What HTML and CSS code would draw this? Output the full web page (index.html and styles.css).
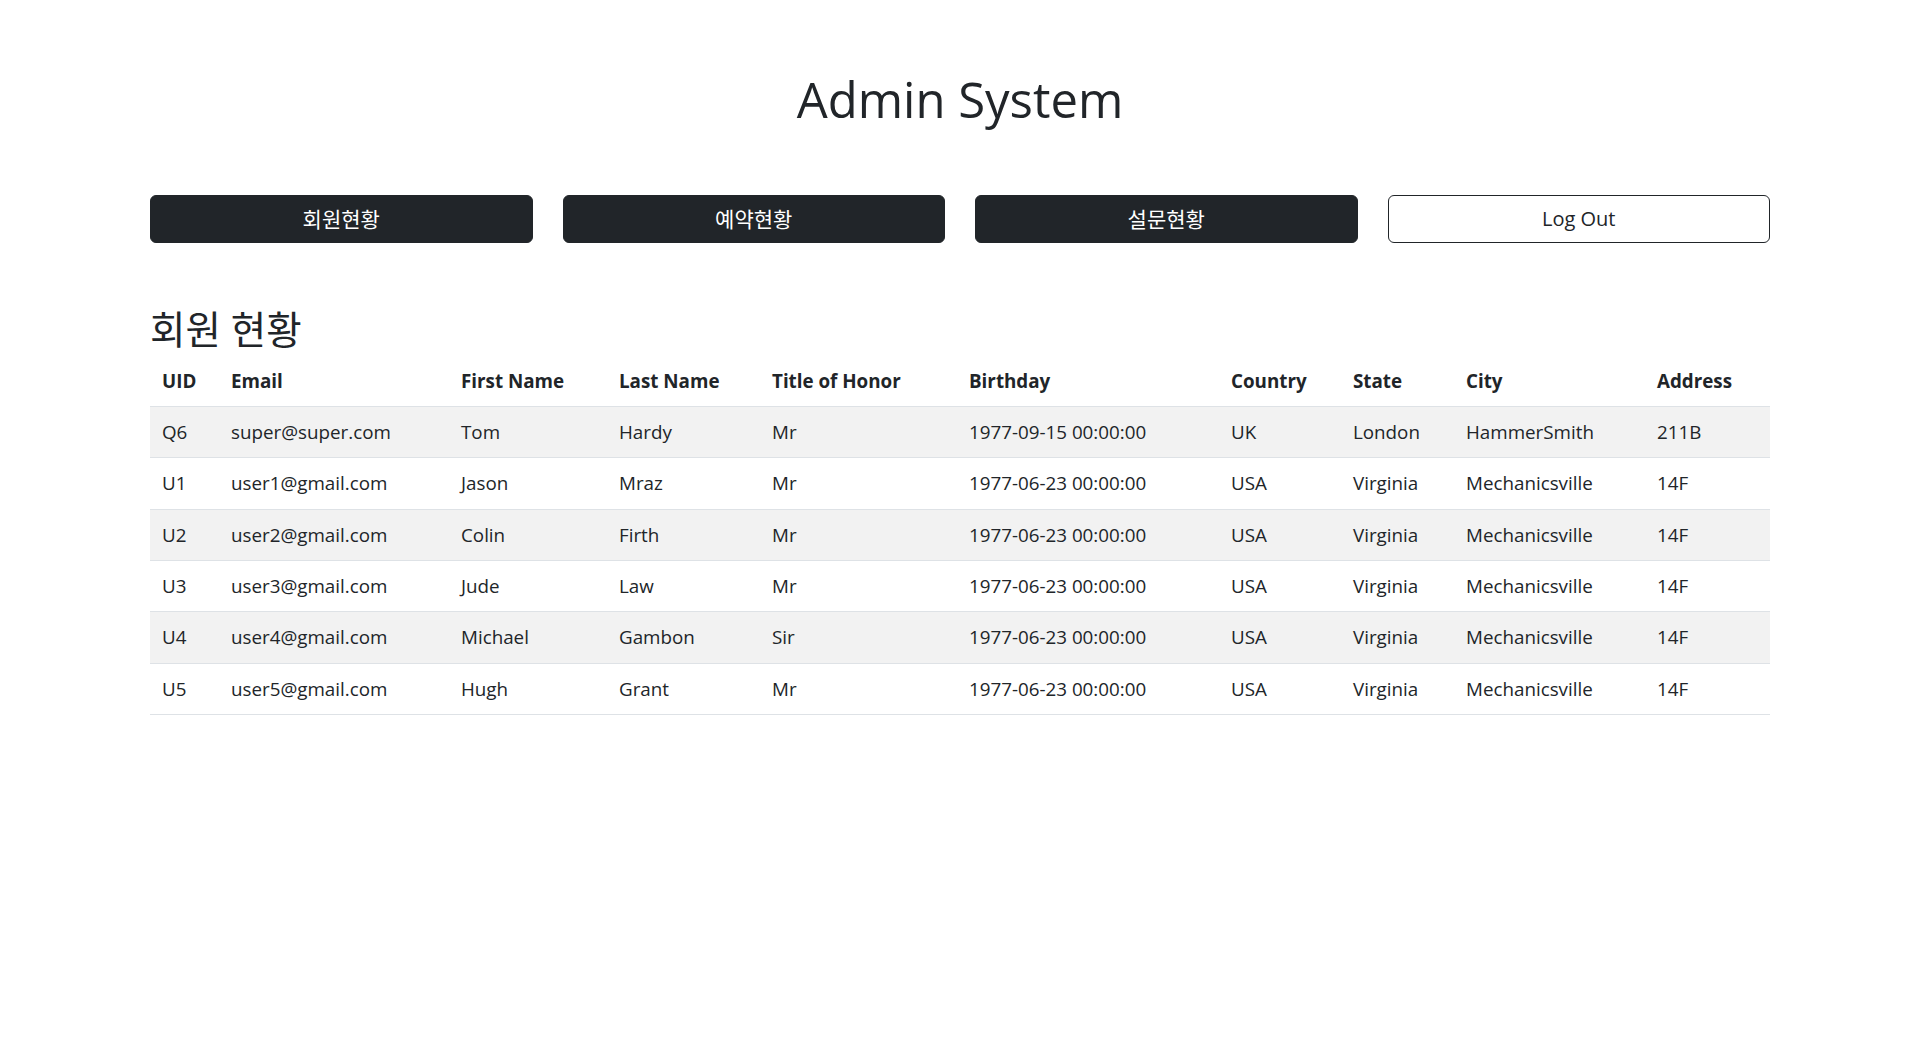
FILE: index.html
```html
<!DOCTYPE html>
<html lang="ko">
<head>
<meta charset="utf-8">
<title>Admin System</title>
<link rel="stylesheet" href="styles.css">
</head>
<body>
<div class="page">
  <h1 class="title">Admin System</h1>
  <nav class="menu">
    <button class="btn btn-dark">회원현황</button>
    <button class="btn btn-dark">예약현황</button>
    <button class="btn btn-dark">설문현황</button>
    <button class="btn btn-outline">Log Out</button>
  </nav>
  <h2 class="section-title">회원 현황</h2>
  <table class="users">
    <colgroup>
      <col class="c-uid"><col class="c-email"><col class="c-first"><col class="c-last"><col class="c-title">
      <col class="c-birth"><col class="c-country"><col class="c-state"><col class="c-city"><col class="c-addr">
    </colgroup>
    <thead>
      <tr><th>UID</th><th>Email</th><th>First Name</th><th>Last Name</th><th>Title of Honor</th><th>Birthday</th><th>Country</th><th>State</th><th>City</th><th>Address</th></tr>
    </thead>
    <tbody>
      <tr><td>Q6</td><td>super@super.com</td><td>Tom</td><td>Hardy</td><td>Mr</td><td>1977-09-15 00:00:00</td><td>UK</td><td>London</td><td>HammerSmith</td><td>211B</td></tr>
      <tr><td>U1</td><td>user1@gmail.com</td><td>Jason</td><td>Mraz</td><td>Mr</td><td>1977-06-23 00:00:00</td><td>USA</td><td>Virginia</td><td>Mechanicsville</td><td>14F</td></tr>
      <tr><td>U2</td><td>user2@gmail.com</td><td>Colin</td><td>Firth</td><td>Mr</td><td>1977-06-23 00:00:00</td><td>USA</td><td>Virginia</td><td>Mechanicsville</td><td>14F</td></tr>
      <tr><td>U3</td><td>user3@gmail.com</td><td>Jude</td><td>Law</td><td>Mr</td><td>1977-06-23 00:00:00</td><td>USA</td><td>Virginia</td><td>Mechanicsville</td><td>14F</td></tr>
      <tr><td>U4</td><td>user4@gmail.com</td><td>Michael</td><td>Gambon</td><td>Sir</td><td>1977-06-23 00:00:00</td><td>USA</td><td>Virginia</td><td>Mechanicsville</td><td>14F</td></tr>
      <tr><td>U5</td><td>user5@gmail.com</td><td>Hugh</td><td>Grant</td><td>Mr</td><td>1977-06-23 00:00:00</td><td>USA</td><td>Virginia</td><td>Mechanicsville</td><td>14F</td></tr>
    </tbody>
  </table>
</div>
</body>
</html>
```

FILE: styles.css
```css
* { box-sizing: border-box; }

html, body {
  margin: 0;
  padding: 0;
  background: #fff;
}

body {
  font-family: "Open Sans", "Noto Sans CJK KR", sans-serif;
  color: #212529;
  font-size: 16px;
  line-height: 1.5;
}

.page {
  width: 1620px;
  margin: 0 auto;
  padding-top: 70px;
}

.title {
  margin: 0;
  text-align: center;
  font-size: 49px;
  font-weight: 400;
  line-height: 58.8px;
}

.menu {
  display: grid;
  grid-template-columns: repeat(4, 1fr);
  gap: 30px;
  margin-top: 66px;
}

.btn {
  display: block;
  width: 100%;
  height: 48px;
  padding: 8px 16px;
  font-family: "Open Sans", "Noto Sans CJK KR", sans-serif;
  font-size: 20px;
  line-height: 30px;
  border-radius: 6px;
  border: 1px solid #212529;
  text-align: center;
  cursor: pointer;
}

.btn-dark {
  background: #212529;
  color: #fff;
  font-size: 21px;
}

.btn-outline {
  background: #fff;
  color: #212529;
}

.section-title {
  margin: 64px 0 4px;
  font-size: 38.5px;
  font-weight: 400;
  line-height: 45px;
}

.users {
  width: 100%;
  border-collapse: collapse;
  table-layout: fixed;
  font-size: 18.8px;
  line-height: 26.3px;
}

.c-uid { width: 69px; }
.c-email { width: 230px; }
.c-first { width: 158px; }
.c-last { width: 153px; }
.c-title { width: 197px; }
.c-birth { width: 262px; }
.c-country { width: 122px; }
.c-state { width: 113px; }
.c-city { width: 191px; }
.c-addr { width: 125px; }

.users th,
.users td {
  padding: 12px;
  text-align: left;
  white-space: nowrap;
  border-bottom: 1px solid #dee2e6;
}

.users th {
  font-weight: 700;
}

.users tbody tr:nth-child(odd) td {
  background: #f2f2f2;
}
```
